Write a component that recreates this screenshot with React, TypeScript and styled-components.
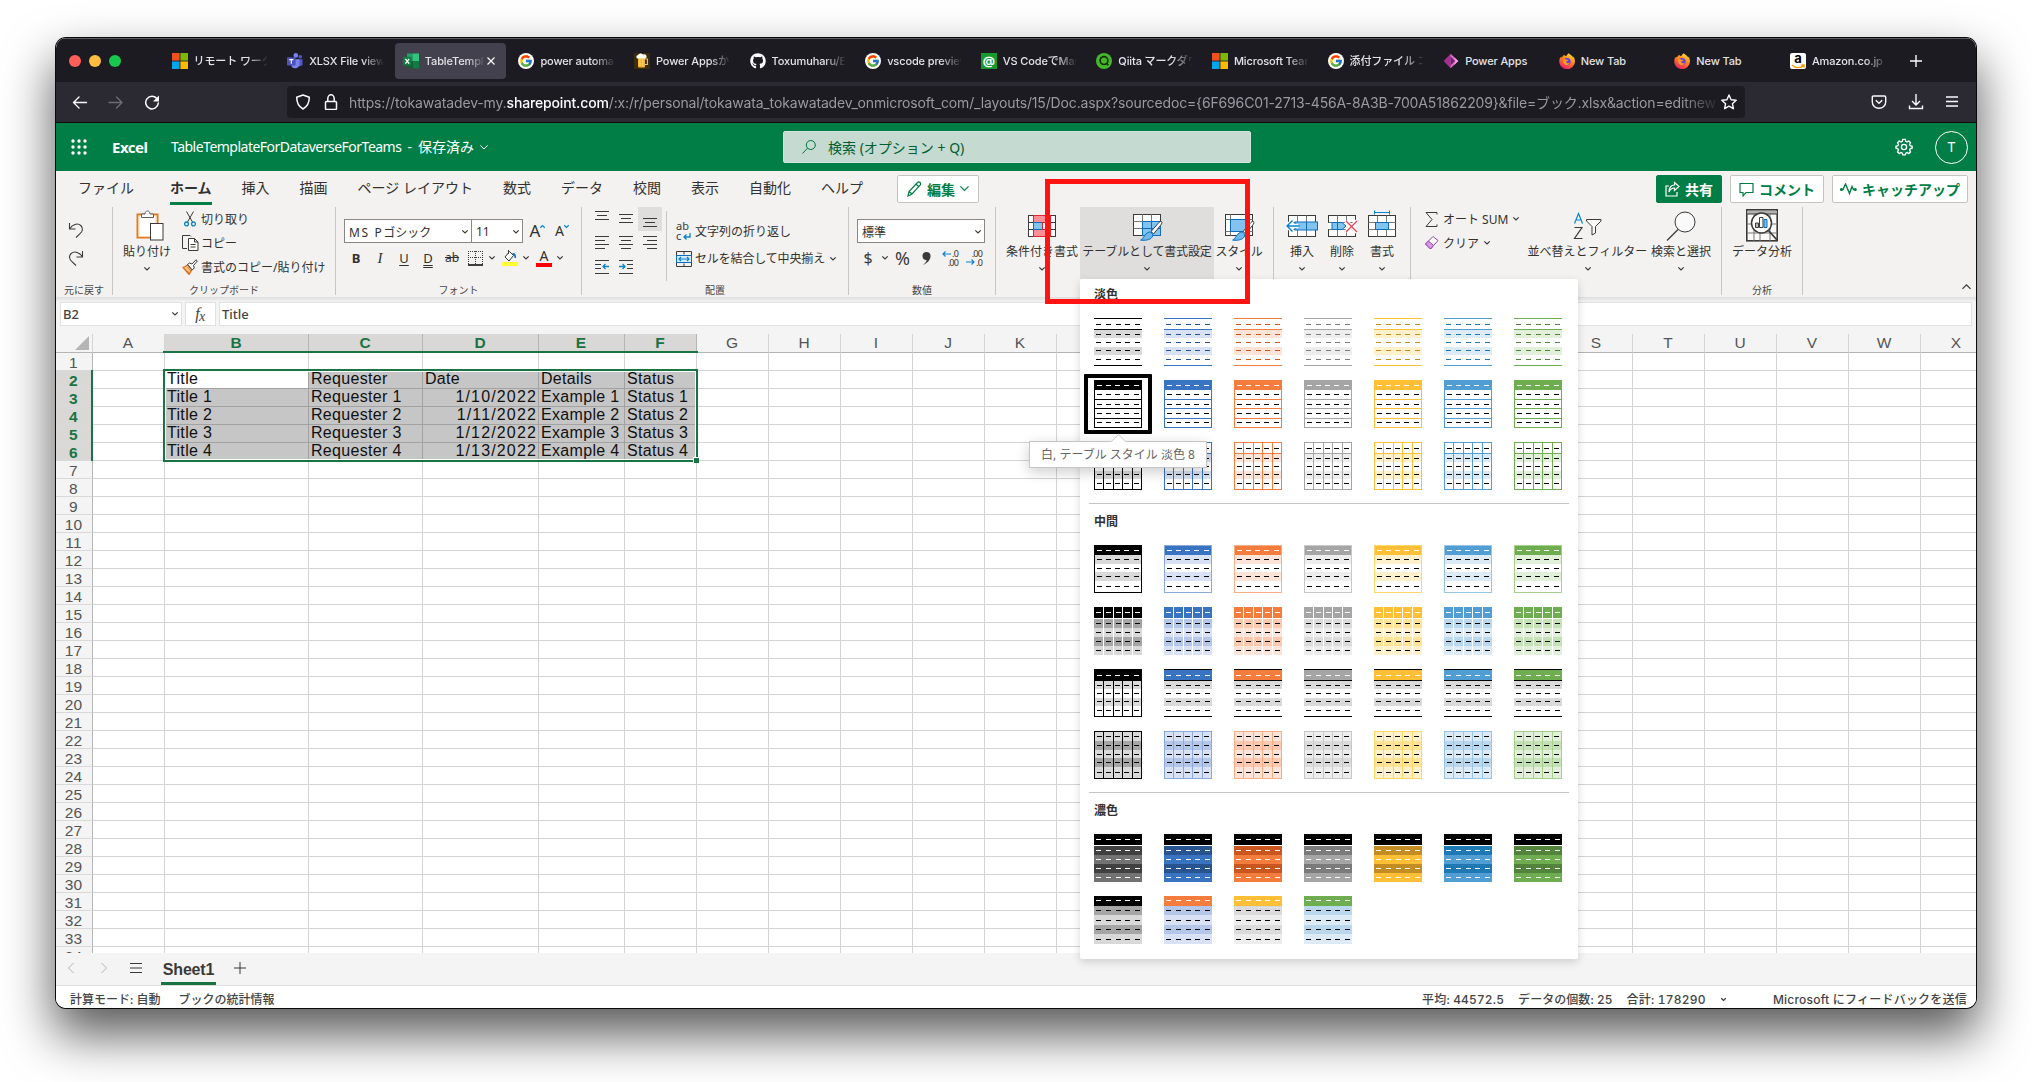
import React from "react";
import styled, { createGlobalStyle, css } from "styled-components";
import { FcGoogle } from "react-icons/fc";
import { FaGithub } from "react-icons/fa";

const UI = `"Noto Sans", "Noto Sans CJK JP", sans-serif`;
const MAC = `Inter, "Noto Sans CJK JP", sans-serif`;
const SHEET = `"Liberation Sans", "Noto Sans CJK JP", sans-serif`;
const GREEN = "#007e45";

const Global = createGlobalStyle`
  html, body { margin: 0; background: #fff; }
  body { width: 2032px; height: 1082px; overflow: hidden; font-family: ${UI}; }
  * { box-sizing: border-box; }
  svg { display: block; flex: none; }
`;

/* ---------- window and browser chrome ---------- */

const Desktop = styled.div`
  width: 2032px;
  height: 1082px;
  padding: 38px 56px 0;
  overflow: hidden;
`;

const Window = styled.div`
  position: relative;
  width: 1920px;
  height: 970px;
  border-radius: 10px;
  box-shadow: 0 0 0 1px #0a0a0a, 0 25px 50px 2px rgba(0, 0, 0, 0.65);
`;

const Clip = styled.div`
  width: 100%;
  height: 100%;
  border-radius: 10px;
  overflow: hidden;
  display: flex;
  flex-direction: column;
  background: #fff;
`;

const TabStrip = styled.div`
  flex: none;
  height: 44px;
  display: flex;
  align-items: center;
  padding-left: 13px;
  background: #1c1b22;
  border-top: 1px solid #5c5b60;
`;

const Lights = styled.div`
  display: flex;
  gap: 8px;
  width: 94.6px;
`;

const Light = styled.span<{ $c: string }>`
  width: 12px;
  height: 12px;
  border-radius: 50%;
  background: ${(p) => p.$c};
`;

const Tab = styled.div<{ $active?: boolean }>`
  width: 111.6px;
  margin-right: 4px;
  height: 36px;
  padding: 0 8px;
  display: flex;
  align-items: center;
  gap: 6px;
  border-radius: 4px;
  background: ${(p) => (p.$active ? "#42414d" : "transparent")};
  color: #fbfbfe;
`;

const TabText = styled.span<{ $fade?: boolean }>`
  flex: 1;
  min-width: 0;
  overflow: hidden;
  white-space: nowrap;
  font: 500 11px/16px ${MAC};
  letter-spacing: -0.12px;
  color: #e3e3e8;
  ${(p) =>
    p.$fade &&
    css`
      mask-image: linear-gradient(to right, #000 72%, transparent 102%);
    `}
`;

const TabClose = styled.span`
  margin: 0 3px 0 -3px;
`;

const NewTab = styled.div`
  padding-left: 12px;
  color: #fbfbfe;
`;

const NavBar = styled.div`
  flex: none;
  height: 41px;
  display: flex;
  align-items: center;
  padding: 0 16px 0 16px;
  background: #2b2a33;
  border-bottom: 1px solid #0c0c0d;
`;

const NavButtons = styled.div`
  display: flex;
  gap: 20px;
  width: 215px;
`;

const UrlBox = styled.div`
  width: 1458px;
  height: 32px;
  display: flex;
  align-items: center;
  padding: 0 8px 0 8px;
  border-radius: 4px;
  background: #1c1b22;
`;

const Url = styled.div`
  flex: 1;
  min-width: 0;
  margin: 2px 6px 0 10px;
  overflow: hidden;
  white-space: nowrap;
  font: 400 14px/20px ${MAC};
  letter-spacing: -0.15px;
  color: #9a99a1;
  mask-image: linear-gradient(to right, #000 97.5%, transparent 100.5%);
  b {
    font-weight: 500;
    color: #fbfbfe;
  }
`;

const NavRight = styled.div`
  margin-left: auto;
  display: flex;
  gap: 19px;
`;

/* ---------- Excel header ---------- */

const Header = styled.div`
  flex: none;
  height: 48px;
  display: flex;
  align-items: center;
  background: ${GREEN};
  color: #fff;
`;

const Waffle = styled.div`
  width: 56px;
  padding-left: 15px;
`;

const AppName = styled.span`
  width: 59px;
  font: 700 15px/20px ${UI};
  letter-spacing: -0.5px;
`;

const DocName = styled.div`
  width: 612px;
  display: flex;
  align-items: center;
  gap: 6px;
  white-space: nowrap;
  font-size: 14px;
  line-height: 20px;
`;

const Latin = styled.span<{ $s?: number }>`
  letter-spacing: ${(p) => p.$s ?? 0}px;
`;

const SearchBox = styled.div`
  width: 468px;
  height: 32px;
  display: flex;
  align-items: center;
  gap: 12px;
  padding-left: 18px;
  border: 1px solid #d5e4dc;
  border-radius: 2px;
  background: #c5dad0;
  color: #005e33;
  font-size: 14px;
`;

const HeaderRight = styled.div`
  margin-left: auto;
  margin-right: 8px;
  display: flex;
  align-items: center;
  gap: 22px;
`;

const Avatar = styled.div`
  width: 33px;
  height: 33px;
  border: 1px solid #fff;
  border-radius: 50%;
  font-size: 14px;
  line-height: 30px;
  text-align: center;
`;

/* ---------- ribbon ---------- */

const Ribbon = styled.div`
  flex: none;
  height: 126px;
  background: #f3f2f1;
  color: #323130;
`;

const MenuRow = styled.div`
  height: 36px;
  display: flex;
  align-items: center;
  padding: 0 8px 0 22px;
`;

const MenuItem = styled.span<{ $active?: boolean; $gap?: number }>`
  height: 31px;
  margin-right: ${(p) => p.$gap ?? 30}px;
  white-space: nowrap;
  font-size: 14px;
  line-height: 28px;
  font-weight: ${(p) => (p.$active ? 700 : 400)};
  border-bottom: 3px solid ${(p) => (p.$active ? GREEN : "transparent")};
`;

const ActionButton = styled.div<{ $w: number; $solid?: boolean; $left?: string }>`
  width: ${(p) => p.$w}px;
  height: 28px;
  margin-left: ${(p) => p.$left ?? "8px"};
  display: flex;
  align-items: center;
  justify-content: center;
  gap: 5px;
  border: 1px solid ${(p) => (p.$solid ? GREEN : "#c6c4c2")};
  border-radius: 2px;
  background: ${(p) => (p.$solid ? GREEN : "#fff")};
  color: ${(p) => (p.$solid ? "#fff" : GREEN)};
  font-size: 14px;
  font-weight: 700;
  white-space: nowrap;
`;

const Groups = styled.div`
  height: 88px;
  display: flex;
`;

const Group = styled.div<{ $w: number }>`
  flex: none;
  width: ${(p) => p.$w}px;
  height: 88px;
  display: flex;
  flex-direction: column;
  border-right: 1px solid #c8c6c4;
`;

const GroupBody = styled.div<{ $pad: number }>`
  height: 76px;
  display: flex;
  padding-left: ${(p) => p.$pad}px;
`;

const GroupLabel = styled.div`
  height: 12px;
  text-align: center;
  font-size: 10px;
  line-height: 14px;
  color: #484644;
  white-space: nowrap;
`;

const Stack = styled.div<{ $top?: number; $gap?: number; $w?: number; $left?: number }>`
  display: flex;
  flex-direction: column;
  gap: ${(p) => p.$gap ?? 0}px;
  padding-top: ${(p) => p.$top ?? 0}px;
  margin-left: ${(p) => p.$left ?? 0}px;
  width: ${(p) => (p.$w ? p.$w + "px" : "auto")};
`;

const Big = styled.div<{ $w: number; $active?: boolean }>`
  position: relative;
  flex: none;
  width: ${(p) => p.$w}px;
  height: 72px;
  display: flex;
  flex-direction: column;
  align-items: center;
  background: ${(p) => (p.$active ? "#dfdedd" : "transparent")};
`;

const BigIcon = styled.div<{ $dx?: number }>`
  height: 37px;
  display: flex;
  align-items: center;
  padding-left: ${(p) => p.$dx ?? 0}px;
`;

const BigLabel = styled.div<{ $s?: number }>`
  height: 16px;
  font-size: 12px;
  line-height: 16px;
  white-space: nowrap;
  letter-spacing: ${(p) => p.$s ?? 0}px;
`;

const BigChev = styled.div`
  height: 18px;
  display: flex;
  align-items: center;
`;

const LineItem = styled.div`
  height: 24px;
  display: flex;
  align-items: center;
  font-size: 12px;
  white-space: nowrap;
`;

const Slot = styled.div<{ $w: number; $bg?: string }>`
  flex: none;
  width: ${(p) => p.$w}px;
  height: 24px;
  display: flex;
  align-items: center;
  justify-content: center;
  background: ${(p) => p.$bg ?? "transparent"};
`;

const RowBox = styled.div`
  display: flex;
  align-items: center;
`;

const Combo = styled.div<{ $w: number; $join?: boolean }>`
  width: ${(p) => p.$w}px;
  height: 24px;
  margin-left: ${(p) => (p.$join ? -1 : 0)}px;
  padding: 1px 3px 0 4px;
  display: flex;
  align-items: center;
  justify-content: space-between;
  border: 1px solid #8a8886;
  background: #fff;
  font-size: 12px;
  white-space: pre;
`;

const Glyph = styled.span<{ $style?: "b" | "i" | "u" | "d" | "s" }>`
  font-family: ${(p) => (p.$style === "i" ? `"Liberation Serif", serif` : UI)};
  font-size: ${(p) => (p.$style === "s" ? 12 : p.$style === "i" ? 15 : 13)}px;
  line-height: 18px;
  font-weight: ${(p) => (p.$style === "b" ? 700 : 400)};
  font-style: ${(p) => (p.$style === "i" ? "italic" : "normal")};
  text-decoration: ${(p) =>
    p.$style === "u"
      ? "underline"
      : p.$style === "d"
        ? "underline double"
        : p.$style === "s"
          ? "line-through"
          : "none"};
  text-underline-offset: 2px;
`;

const Symbol = styled.span<{ $size: number }>`
  font-size: ${(p) => p.$size}px;
  line-height: 24px;
  color: #3b3a39;
`;

const VRule = styled.div`
  width: 1px;
  height: 70px;
  margin: 4px 0 0 4px;
  background: #c8c6c4;
`;

const Collapse = styled.div`
  margin: 77px 5px 0 auto;
`;

/* ---------- formula bar ---------- */

const FormulaBar = styled.div`
  flex: none;
  height: 37px;
  display: flex;
  padding: 5px 4px 0;
  gap: 3px;
  background: linear-gradient(#dfdedd, #f0f0f0 4px, #f4f4f4 5px);
`;

const FBox = styled.div<{ $w?: number; $center?: boolean }>`
  width: ${(p) => (p.$w ? p.$w + "px" : "auto")};
  flex: ${(p) => (p.$w ? "none" : 1)};
  height: 24px;
  display: flex;
  align-items: center;
  justify-content: ${(p) => (p.$center ? "center" : "space-between")};
  padding: 0 3px 0 2px;
  border: 1px solid #e1e1e1;
  background: #fff;
  font-size: 13px;
  font-weight: 500;
  color: #444;
`;

const Fx = styled.span`
  font: italic 16px/20px "Liberation Serif", serif;
  letter-spacing: -0.5px;
  sub {
    font-size: 14px;
    vertical-align: -2px;
    line-height: 0;
  }
`;

/* ---------- sheet ---------- */

const Sheet = styled.div`
  position: relative;
  flex: none;
  height: 619px;
  overflow: hidden;
  background: #fff;
`;

const SheetRow = styled.div<{ $h: number }>`
  display: flex;
  width: 2000px;
  height: ${(p) => p.$h}px;
`;

const ColHead = styled.div<{ $w: number; $sel?: boolean }>`
  flex: none;
  width: ${(p) => p.$w}px;
  height: 19px;
  padding-right: 1px;
  text-align: center;
  font: ${(p) => (p.$sel ? 700 : 400)} 15.5px/18px ${SHEET};
  color: ${(p) => (p.$sel ? "#1a7343" : "#555")};
  background: ${(p) => (p.$sel ? "#d9d8d6" : "#f4f4f4")};
  border-right: 1px solid ${(p) => (p.$sel ? "#b5b5b5" : "#d4d4d4")};
  border-bottom: 1px solid #b5b5b5;
`;

const Corner = styled(ColHead)`
  display: flex;
  justify-content: flex-end;
  align-items: flex-end;
  padding: 0 3px 2px 0;
`;

const RowHead = styled.div<{ $sel?: boolean }>`
  flex: none;
  width: 37px;
  height: 18px;
  padding-right: 1px;
  text-align: center;
  font: ${(p) => (p.$sel ? 700 : 400)} 15.5px/20px ${SHEET};
  letter-spacing: 0.2px;
  color: ${(p) => (p.$sel ? "#1a7343" : "#555")};
  background: ${(p) => (p.$sel ? "#d9d8d6" : "#f4f4f4")};
  border-right: 1px solid #b5b5b5;
  border-bottom: 1px solid #d9d9d9;
`;

const Cell = styled.div<{ $w: number; $sel?: boolean; $right?: boolean; $active?: boolean }>`
  flex: none;
  width: ${(p) => p.$w}px;
  height: 18px;
  padding: 0 1px 0 2px;
  text-align: ${(p) => (p.$right ? "right" : "left")};
  font: 16px/16px ${SHEET};
  letter-spacing: ${(p) => (p.$right ? 1.15 : 0.32)}px;
  white-space: nowrap;
  color: #111;
  background: ${(p) => (p.$active ? "#fff" : p.$sel ? "#c6c6c6" : "#fff")};
  border-right: 1px solid ${(p) => (p.$sel ? "#a2a2a2" : "#d4d4d4")};
  border-bottom: 1px solid ${(p) => (p.$sel ? "#a2a2a2" : "#d4d4d4")};
`;

const Selection = styled.div`
  position: absolute;
  left: 107px;
  top: 35px;
  width: 535px;
  height: 93px;
  border: 2px solid #1a7343;
  box-shadow: inset 0 0 0 1px #fff;
`;

const Handle = styled.div`
  position: absolute;
  right: -3px;
  bottom: -3px;
  width: 6px;
  height: 6px;
  background: #1a7343;
  border: 1px solid #fff;
  border-width: 1px 0 0 1px;
`;

const ColMark = styled.div`
  position: absolute;
  left: 107px;
  top: 17px;
  width: 535px;
  height: 2px;
  background: #1a7343;
`;

const RowMark = styled.div`
  position: absolute;
  left: 35px;
  top: 36px;
  width: 2px;
  height: 91px;
  background: #1a7343;
`;

const SheetTabs = styled.div`
  flex: none;
  height: 33px;
  display: flex;
  align-items: flex-start;
  padding-left: 9px;
  background: #f4f4f4;
  border-bottom: 1px solid #dcdcdc;
  color: #3b3a39;
`;

const TabSlot = styled.div<{ $w: number }>`
  width: ${(p) => p.$w}px;
  height: 30px;
  display: flex;
  align-items: center;
`;

const SheetName = styled.div`
  width: 55px;
  height: 32px;
  margin-right: 18px;
  text-align: center;
  font: 700 16px/34px ${SHEET};
  letter-spacing: -0.2px;
  border-bottom: 3px solid #1a7343;
`;

const StatusBar = styled.div`
  flex: 1;
  display: flex;
  align-items: center;
  padding: 5px 9px 0 14px;
  background: #fff;
  font: 500 12px/17px ${MAC};
  font-variant-numeric: tabular-nums;
  color: #444;
  white-space: pre;
`;

const Stat = styled.span<{ $gap: number; $s?: number }>`
  margin-right: ${(p) => p.$gap}px;
  letter-spacing: ${(p) => p.$s ?? 0}px;
`;

const Spacer = styled.span`
  flex: 1;
`;

/* ---------- table style gallery ---------- */

const Gallery = styled.div`
  position: absolute;
  left: 0;
  top: 72px;
  width: 498px;
  height: 680px;
  padding: 6px 9px 0;
  background: #fff;
  border-radius: 2px;
  box-shadow: 0 3px 8px rgba(0, 0, 0, 0.16);
  z-index: 5;
`;

const Section = styled.div<{ $rule?: boolean }>`
  padding: ${(p) => (p.$rule ? "8px 5px 0" : "0 5px 0")};
  margin-top: ${(p) => (p.$rule ? 13 : 0)}px;
  border-top: ${(p) => (p.$rule ? "1px solid #c4c4c4" : "none")};
`;

const SectionTitle = styled.div<{ $h: number }>`
  height: ${(p) => p.$h}px;
  font: 700 12px/20px ${UI};
  color: #323130;
`;

const Swatches = styled.div`
  display: grid;
  grid-template-columns: repeat(7, 48px);
  gap: 14px 22px;
`;

const SwatchCell = styled.div`
  position: relative;
  width: 48px;
  height: 48px;
`;

const Picked = styled.div`
  position: absolute;
  left: -10px;
  top: -6px;
  width: 68px;
  height: 60px;
  border: 4px solid #000;
  border-radius: 1px;
`;

const Tooltip = styled.div`
  position: absolute;
  left: -65px;
  top: 61px;
  width: 178px;
  height: 27px;
  z-index: 3;
  background: #fff;
  border: 1px solid #c8c6c4;
  box-shadow: 0 4px 14px rgba(0, 0, 0, 0.2);
  color: #666;
  font: 12px/25px ${UI};
  text-align: center;
  white-space: nowrap;
  &::before {
    content: "";
    position: absolute;
    left: 83px;
    top: -6px;
    width: 10px;
    height: 10px;
    background: #fff;
    border: 1px solid #d8d6d4;
    border-width: 1px 0 0 1px;
    transform: rotate(45deg);
  }
`;

const RedFrame = styled.div`
  position: absolute;
  left: 989px;
  top: 141px;
  width: 205px;
  height: 125px;
  border: 5px solid #ff1414;
  z-index: 9;
`;

/* ---------- icons ---------- */

const INK = "#3b3a39";
const BLUE = "#0a84d0";

const Chev = ({ size = 6, c = INK, up, w = 1.2 }: { size?: number; c?: string; up?: boolean; w?: number }) => (
  <svg width={size} height={size * 0.6} viewBox="0 0 10 6" fill="none" stroke={c} strokeWidth={(w * 10) / size} overflow="visible">
    <path d={up ? "M0.5 5.5 5 1 9.5 5.5" : "M0.5 0.5 5 5 9.5 0.5"} />
  </svg>
);

const Ic = ({ w = 20, h = w, box, children, c = INK, sw = 1 }: { w?: number; h?: number; box?: string; children: React.ReactNode; c?: string; sw?: number }) => (
  <svg width={w} height={h} viewBox={box ?? `0 0 ${w} ${h}`} fill="none" stroke={c} strokeWidth={sw}>
    {children}
  </svg>
);

const MsLogo = () => (
  <svg width="16" height="16">
    <rect width="7.6" height="7.6" fill="#f25022" />
    <rect x="8.4" width="7.6" height="7.6" fill="#7fba00" />
    <rect y="8.4" width="7.6" height="7.6" fill="#00a4ef" />
    <rect x="8.4" y="8.4" width="7.6" height="7.6" fill="#ffb900" />
  </svg>
);

const TeamsLogo = () => (
  <svg width="16" height="16">
    <circle cx="13.3" cy="3.8" r="1.8" fill="#5059c9" />
    <circle cx="8.8" cy="2.4" r="2.3" fill="#7b83eb" />
    <path d="M10 6.2h5.5v5a2.6 2.6 0 0 1-4 1.6z" fill="#5059c9" />
    <path d="M5 6.2h7.5v5a4.4 4.4 0 0 1-8 2.2z" fill="#7b83eb" />
    <rect y="4.2" width="8.6" height="8.4" rx="0.8" fill="#4b53bc" />
    <path d="M2.2 6.6h4.2M4.3 6.6v4.2" stroke="#fff" strokeWidth="1.1" />
  </svg>
);

const ExcelLogo = () => (
  <svg width="16" height="16">
    <rect x="4" y="0.5" width="6" height="7.5" fill="#21a366" />
    <rect x="10" y="0.5" width="6" height="7.5" fill="#33c481" />
    <rect x="4" y="8" width="6" height="7.5" fill="#185c37" />
    <rect x="10" y="8" width="6" height="7.5" fill="#107c41" />
    <rect y="3.8" width="8.6" height="8.6" rx="0.8" fill="#107c41" />
    <path d="M2.4 5.8l3.8 4.8M6.2 5.8l-3.8 4.8" stroke="#fff" strokeWidth="1.3" />
  </svg>
);

const GoogleDisc = styled.span`
  width: 16px;
  height: 16px;
  flex: none;
  display: grid;
  place-items: center;
  border-radius: 50%;
  background: #fff;
`;

const Google = () => (
  <GoogleDisc>
    <FcGoogle size={14} />
  </GoogleDisc>
);

const Beer = () => (
  <svg width="16" height="16">
    <rect width="16" height="16" fill="#3c2c0c" />
    <rect x="4" y="4" width="7" height="10.5" rx="1" fill="#f8b62c" />
    <path d="M6 6v7M8.6 6v7" stroke="#ffd878" strokeWidth="0.9" />
    <path d="M11 6h2.4v5.5H11" fill="none" stroke="#d9c9a0" strokeWidth="1.1" />
    <path d="M3.4 5.5a1.8 1.8 0 0 1 .6-3.4 3 3 0 0 1 5-.5 2 2 0 0 1 2.4 3.9z" fill="#fff" />
  </svg>
);

const AtMark = styled.span`
  width: 16px;
  height: 16px;
  flex: none;
  background: #159a2d;
  color: #fff;
  font: 700 12px/15px ${MAC};
  text-align: center;
`;

const Qiita = () => (
  <svg width="16" height="16" fill="none">
    <circle cx="8" cy="8" r="8" fill="#45b82a" />
    <circle cx="8" cy="7.6" r="3.9" stroke="#14310b" strokeWidth="1.7" />
    <path d="M10.5 10.4l1.8 1.9" stroke="#14310b" strokeWidth="1.6" />
    <path d="M4 4.4l1 .4" stroke="#14310b" strokeWidth="1" />
  </svg>
);

const PowerApps = () => (
  <svg width="16" height="16">
    <path d="M7.6 0.8 12 8l-4.4 7.2L0.6 8z" fill="#a2308f" />
    <path d="M7.6 0.8 15.4 8l-7.8 7.2z" fill="#d56fc4" />
    <path d="M7.6 3.6 12 8l-4.4 4.4z" fill="#7a1a6c" />
    <path d="M10.8 4.2 15.4 8l-4.6 4.2L12.6 8z" fill="#ee9fe0" />
  </svg>
);

const Firefox = () => (
  <svg width="16" height="16">
    <defs>
      <linearGradient id="ffx" x1="0.8" y1="0" x2="0.3" y2="1">
        <stop offset="0" stopColor="#ffe040" />
        <stop offset="0.45" stopColor="#ff8a16" />
        <stop offset="1" stopColor="#f0196e" />
      </linearGradient>
    </defs>
    <path d="M9.6 0.2c1 1 3.4 2 4.6 4.4.3-.3.3-.8.2-1.2 1.7 2.1 2 5.8.8 8.2A7.8 7.8 0 0 1 .3 8.6c-.1-2.2.5-4 1.9-5.2 0 .5.1.9.4 1.2C3.3 3.4 4.4 2.8 5 1.4c.4 1 1.1 1.4 2.3 1.6C7.6 2 8.6 1.2 9.6.2z" fill="url(#ffx)" />
    <circle cx="8" cy="8.6" r="3.7" fill="#6b3fe0" />
    <path d="M4.2 6.6c1.2-.9 2.4-.5 3.3.2l1.9.3c-.5 1.3-2 .9-2.2 1.9.4 1.5 2.3 1.7 3.6.8-.5 2-3 2.9-4.8 1.9-1.7-1-2.3-3.2-1.8-5.1z" fill="#ff9a1a" />
  </svg>
);

const AmazonTile = styled.span`
  position: relative;
  width: 16px;
  height: 16px;
  flex: none;
  border-radius: 2px;
  background: #fff;
  color: #000;
  font: 700 13px/11px ${MAC};
  text-align: center;
  svg {
    position: absolute;
    left: 1px;
    bottom: 0;
  }
`;

const Amazon = () => (
  <AmazonTile>
    a
    <svg width="14" height="5" fill="none" stroke="#ff9900" strokeWidth="1.4">
      <path d="M1 1c3.5 3.4 8 3.4 11.5 .6M10.2 1h2.8v2.6" />
    </svg>
  </AmazonTile>
);

const TABS: { icon: React.ReactNode; text: string; active?: boolean; fade?: boolean }[] = [
  { icon: <MsLogo />, text: "リモート ワークの", fade: true },
  { icon: <TeamsLogo />, text: "XLSX File viewer", fade: true },
  { icon: <ExcelLogo />, text: "TableTemplate", active: true, fade: true },
  { icon: <Google />, text: "power automate", fade: true },
  { icon: <Beer />, text: "Power Appsから", fade: true },
  { icon: <FaGithub size={16} />, text: "Toxumuharu/Ex", fade: true },
  { icon: <Google />, text: "vscode preview", fade: true },
  { icon: <AtMark>@</AtMark>, text: "VS CodeでMark", fade: true },
  { icon: <Qiita />, text: "Qiita マークダウ", fade: true },
  { icon: <MsLogo />, text: "Microsoft Teams", fade: true },
  { icon: <Google />, text: "添付ファイル コン", fade: true },
  { icon: <PowerApps />, text: "Power Apps" },
  { icon: <Firefox />, text: "New Tab" },
  { icon: <Firefox />, text: "New Tab" },
  { icon: <Amazon />, text: "Amazon.co.jp", fade: true },
];

/* table based ribbon icons, 28x22 grid */
const GridBase = ({ children, fill = "#fff" }: { children?: React.ReactNode; fill?: string }) => (
  <g>
    <rect x="0.5" y="3.5" width="27" height="21" fill={fill} stroke={INK} />
    <path d="M0.5 10.5h27M0.5 17.5h27M9.5 3.5v21M18.5 3.5v21" stroke="#797774" strokeWidth="1" />
    {children}
  </g>
);

const Brush = ({ x = 8, y = 10 }: { x?: number; y?: number }) => (
  <g transform={`translate(${x} ${y})`}>
    <path d="M21.5 0.5c1 .8.2 2.2-1 3.9l-6.8 8.4-2.7-2.2L18 2.5c1.4-1.6 2.6-2.7 3.5-2z" fill="#fff" stroke={INK} />
    <path d="M8 11.5c2.3-1.3 5.4 1 4.6 3.6-.9 2.9-5.3 4.8-12 4 3.3-1.3 3.3-5.8 7.4-7.6z" fill="#6db8ec" stroke="#0f6cbd" />
  </g>
);

const CondIcon = () => (
  <Ic w={28} h={28}>
    <GridBase>
      <rect x="5.5" y="3.5" width="17" height="21" fill="#ff8f97" stroke="#e0242f" />
      <rect x="5.5" y="10.5" width="9" height="7" fill="#83c3f0" stroke="#0f6cbd" />
      <rect x="14.5" y="10.5" width="8" height="7" fill="#fff" stroke="#e0242f" />
      <path d="M0 10.5h5M0 17.5h5M23 10.5h5M23 17.5h5" stroke={INK} />
    </GridBase>
  </Ic>
);

const TableFmtIcon = () => (
  <Ic w={30} h={31} box="0 -1 30 31">
    <GridBase>
      <path d="M9.5 10.5h18v14h-18zM9.5 17.5h18M18.5 10.5v14" fill="#83c3f0" stroke="#0f6cbd" />
    </GridBase>
    <Brush x={7} y={10} />
  </Ic>
);

const StyleIcon = () => (
  <Ic w={30} h={31} box="0 -1 30 31">
    <rect x="0.5" y="3.5" width="27" height="21" fill="#fff" />
    <path d="M0.5 8.5h27M0.5 20.5h27M5.5 3.5v21M23.5 3.5v21" stroke="#797774" />
    <rect x="5.5" y="8.5" width="18" height="12" fill="#83c3f0" stroke="#0f6cbd" />
    <Brush x={7} y={10} />
  </Ic>
);

const InsertIcon = () => (
  <Ic w={32} h={28}>
    <g transform="translate(2 0)">
      <GridBase />
      <rect x="7" y="10" width="22.5" height="8" fill="#83c3f0" stroke="#0f6cbd" />
      <path d="M18.5 10v8" stroke="#0f6cbd" />
    </g>
    <path d="M12.5 14h-10M6.5 8.5 1 14l5.5 5.5" stroke="#fff" strokeWidth="4" />
    <path d="M13.5 14H1.5M6.5 8.5 1 14l5.5 5.5" stroke={BLUE} strokeWidth="1.5" />
  </Ic>
);

const DeleteIcon = () => (
  <Ic w={30} h={28}>
    <GridBase>
      <path d="M0 11h28v6H0z" fill="#fff" stroke="none" />
      <path d="M4 10.5h10l4 3.5-4 3.5H4z" fill="#83c3f0" stroke="#0f6cbd" />
      <path d="M9.5 10.5v7" stroke="#0f6cbd" />
    </GridBase>
    <path d="M18 9l11 11M29 9 18 20" stroke="#fff" strokeWidth="4" />
    <path d="M18 9l11 11M29 9 18 20" stroke="#e8444e" strokeWidth="1.3" />
  </Ic>
);

const FormatIcon = () => (
  <Ic w={28} h={32} box="0 -2 28 32">
    <GridBase>
      <rect x="7.5" y="10.5" width="13" height="7" fill="#83c3f0" stroke="#0f6cbd" />
    </GridBase>
    <path d="M6.5 -1.5v4M21.5 -1.5v4M6.5 0.5h15" stroke={BLUE} />
  </Ic>
);

const PasteIcon = () => (
  <Ic w={28} h={31}>
    <rect x="1.5" y="4.5" width="20" height="23" fill="#fff" stroke="#e07a28" strokeWidth="2" />
    <rect x="3" y="6" width="17" height="20.5" fill="none" stroke="#fbd9a0" />
    <path d="M5.5 7.5V4H9c0-1.8 1-3 2.5-3S14 2.200 14 4h3.500v3.500z" fill="#fff" stroke="#605e5c" />
    <rect x="14.5" y="13.5" width="12.5" height="16.5" fill="#fff" />
  </Ic>
);

const ScissorsIcon = () => (
  <Ic w={12} h={16}>
    <path d="M2.5 0.5 8.5 11M9.5 0.5 3.5 11" />
    <circle cx="2.5" cy="12.9" r="1.9" stroke={BLUE} strokeWidth="1.3" />
    <circle cx="9.5" cy="12.9" r="1.9" stroke={BLUE} strokeWidth="1.3" />
  </Ic>
);

const CopyIcon = () => (
  <Ic w={17} h={16}>
    <path d="M5 13.5H0.5v-13H8l1 1" />
    <path d="M6.5 3.5h6l3.5 3.5v8.5H6.5zM12.5 3.5V7H16M8.5 9.5h5M8.5 12h5" fill="#fff" />
  </Ic>
);

const PainterIcon = () => (
  <Ic w={16} h={16}>
    <path d="M1 8.5 6 6l4 4.5L7 15.5z" fill="#f9c890" stroke="#e0711c" strokeWidth="1.3" />
    <path d="M5.5 5.5 7.5 4l2.5 1L14 .8 15.3 2 11.5 6.5l.8 2.5-2 2z" fill="#fff" />
    <path d="M3 10.5l5 4M5.5 8l3.5 4" stroke="#e0711c" />
  </Ic>
);

const UndoIcon = ({ flip }: { flip?: boolean }) => (
  <Ic w={16} h={16} sw={1.1}>
    <g transform={flip ? "translate(16 0) scale(-1 1)" : undefined}>
      <path d="M1.5 1v6h6" />
      <path d="M1.8 6.7C4 2.5 9.5 0.5 12.8 3.5c3 3 1.5 6.3-.8 8.2L8 15.5" />
    </g>
  </Ic>
);

const Lines = ({ kind, top = 0 }: { kind: "c" | "l" | "r" | "v"; top?: number }) => {
  const ys = kind === "v" ? [0.5, 4.5, 8.5] : [0.5, 4.5, 8.5, 12.5];
  return (
    <Ic w={14} h={24} c={INK}>
      <g transform={`translate(0 ${top})`}>
        {ys.map((y, i) => {
          const short = i % 2 === 1;
          const x = !short || kind === "l" ? 0 : kind === "r" ? 4 : 2;
          return <path key={y} d={`M${x} ${y}h${short ? 10 : 14}`} />;
        })}
      </g>
    </Ic>
  );
};

const IndentIcon = ({ right }: { right?: boolean }) => (
  <Ic w={14} h={14}>
    <path d={right ? "M0 .5h14M8 4.5h6M8 8.5h6M0 13.5h14" : "M0 .5h14M0 4.5h6M0 8.5h6M0 13.5h14"} />
    <path d={right ? "M0 6.5h6M3.5 4l2.5 2.5L3.5 9" : "M14 6.5H8M10.5 4 8 6.5 10.5 9"} stroke={BLUE} strokeWidth="1.3" />
  </Ic>
);

const BordersIcon = () => (
  <Ic w={15} h={15}>
    <path d="M0 .5h15M.5 0v13M14.5 0v13M7.5 0v13M0 6.5h15" strokeDasharray="1 1" />
    <path d="M0 14h15" stroke="#111" strokeWidth="1.6" />
  </Ic>
);

const FillIcon = () => (
  <Ic w={16} h={16}>
    <path d="M7.5 1.5 3 7l4 4 4.5-5.5zM6.5 0v4" fill="#fff" />
    <path d="M10.5 4c2-.5 2.8 1 2.8 4" stroke="#0f6cbd" strokeWidth="1.6" />
    <path d="M0 14h16" stroke="#ffff38" strokeWidth="4" />
  </Ic>
);

const ColorBox = styled.div`
  width: 16px;
  height: 17px;
  border-bottom: 4px solid #f00;
  text-align: center;
  font: 14px/12px ${UI};
`;

const WrapBox = styled.div`
  position: relative;
  width: 16px;
  height: 20px;
  display: flex;
  flex-direction: column;
  font: 11px/10px ${UI};
  color: ${INK};
  svg {
    position: absolute;
    right: 1px;
    bottom: 0;
  }
`;

const DecBox = styled.div<{ $right?: boolean }>`
  width: 16px;
  height: 18px;
  position: relative;
  font: 9px/9px ${UI};
  letter-spacing: -0.8px;
  text-align: right;
  white-space: pre;
  svg {
    position: absolute;
    left: 0;
    top: ${(p) => (p.$right ? 10 : 2)}px;
  }
`;

const MergeIcon = () => (
  <Ic w={16} h={16}>
    <path d="M.5 .5h15v15H.5zM8 .5v3M8 12.5v3" />
    <path d="M.5 4.5h15v7H.5z" fill="#d5ebfb" stroke="#0f6cbd" />
    <path d="M3 8h10M5 6 3 8l2 2M11 6l2 2-2 2" stroke={BLUE} strokeWidth="1.2" />
  </Ic>
);

const AFont = styled.span<{ $size: number }>`
  font: ${(p) => p.$size}px/18px ${UI};
  align-self: center;
`;

const SigmaIcon = () => (
  <Ic w={13} h={15}>
    <path d="M12 2.5V.5H1l6 7-6 7h11v-2" />
  </Ic>
);

const EraserIcon = () => (
  <Ic w={16} h={16}>
    <path d="M1.5 9 9 1.5l5 4L6.5 14z" fill="#fff" stroke="#9a3fb0" />
    <path d="M1.5 9 4.5 6l5 4.5-3 3.5z" fill="#d79be2" stroke="#9a3fb0" />
  </Ic>
);

const SortIcon = () => (
  <svg width="30" height="28" fill="none">
    <path d="M1.5 11.5 5.5 1.5 9.5 11.5M3 8h5" stroke={BLUE} strokeWidth="1.2" />
    <path d="M1.5 15.5h7.5l-7.5 11h8" stroke={INK} strokeWidth="1.2" />
    <path d="M13.5 7.5H28V9l-5.5 5.5V21L19 23v-8.5L13.5 9z" stroke={INK} fill="#fafafa" />
  </svg>
);

const FindIcon = () => (
  <Ic w={30} h={30}>
    <circle cx="19" cy="11" r="10" fill="#fafafa" />
    <path d="M12 18.5 1 29.5" strokeWidth="1.3" />
  </Ic>
);

const AnalyzeIcon = () => (
  <Ic w={32} h={33}>
    <rect x="0.8" y="0.8" width="30.4" height="31" fill="#fafafa" strokeWidth="1.6" />
    <path d="M1 3.500h30" stroke="#b3b0ad" strokeWidth="3" />
    <path d="M1 5h30" stroke={INK} strokeWidth="1.2" />
    <path d="M1 15h30M1 24h30M8 5v27M24 5v27M14 24v8" stroke="#797774" />
    <circle cx="15.5" cy="14" r="10" fill="#fff" strokeWidth="1.5" />
    <path d="M9.5 18.5V14h3v4.500z" fill="#bbb" />
    <path d="M13.5 18.5v-10H17v10z" fill="#fff" />
    <path d="M18 18.5v-8h3v8z" fill="#83c3f0" stroke="#0f6cbd" />
    <path d="M22.5 21.5 31 31" strokeWidth="1.8" />
  </Ic>
);

/* ---------- swatch drawing ---------- */

type Tone = { base: string; dark: string; l1: string; l2: string; edge: string; dash: string };

const TONES: Tone[] = [
  { base: "#000000", dark: "#404040", l1: "#a6a6a6", l2: "#d9d9d9", edge: "#000000", dash: "#000000" },
  { base: "#3974c3", dark: "#27538f", l1: "#b4c7e9", l2: "#d9e2f4", edge: "#8ca9dc", dash: "#27538f" },
  { base: "#f47c3c", dark: "#c8561e", l1: "#fcc9ae", l2: "#fde4d8", edge: "#f6ae86", dash: "#c8561e" },
  { base: "#a5a5a5", dark: "#7b7b7b", l1: "#dbdbdb", l2: "#ededed", edge: "#c8c8c8", dash: "#7b7b7b" },
  { base: "#ffbf37", dark: "#c48d24", l1: "#ffe497", l2: "#fff1cc", edge: "#ffd966", dash: "#c48d24" },
  { base: "#509ed4", dark: "#1e78b4", l1: "#bad8ed", l2: "#ddebf7", edge: "#98c4e6", dash: "#1e78b4" },
  { base: "#6fae50", dark: "#51833b", l1: "#c5e1b6", l2: "#e2f0db", edge: "#a8d08d", dash: "#51833b" },
];

const X_A = [3, 12, 21, 30, 40];
const X_B = [2, 12, 22, 31, 41];

type Kind = "L1" | "L2" | "L3" | "M1" | "M2" | "M3" | "M4" | "D1" | "D2";

const Swatch = ({ kind, t, head }: { kind: Kind; t: Tone; head?: string }) => {
  const fill = (y: number, h: number, c: string, x = 0, w = 48) => <rect key={`f${x}-${y}`} x={x} y={y} width={w} height={h} fill={c} />;
  const dashes = (xs: number[], ys: number[], c: string, first = c) =>
    ys.flatMap((y, i) => xs.map((x) => <rect key={`d${x}-${y}`} x={x} y={y} width="5" height="1" fill={i === 0 ? first : c} />));
  const frame = (c: string) => <rect x="0.5" y="0.5" width="47" height="47" fill="none" stroke={c} />;
  const cols = (c: string, y: number) => [9, 19, 28, 38].map((x) => fill(y, 48 - y, c, x, 1));
  const black = t.base === "#000000";
  const parts: Record<Kind, () => React.ReactNode> = {
    L1: () => [fill(0, 1, t.base), fill(11, 1, t.base), fill(12, 8, t.l2), fill(29, 8, t.l2), fill(47, 1, t.base), dashes(X_B, [6, 16, 24, 32, 41], t.dash)],
    L2: () => [frame(t.base), fill(0, 10, t.base), fill(19, 1, t.base), fill(28, 1, t.base), fill(38, 1, t.base), dashes(X_A, [5, 14, 24, 33, 42], "#000", "#fff")],
    L3: () => [fill(12, 8, t.l2), fill(29, 8, t.l2), fill(11, 1, t.base), cols(t.base, 0), frame(t.base), dashes(X_A, [6, 16, 24, 32, 41], "#000")],
    M1: () => [fill(0, 10, t.base), fill(10, 9, t.l2), fill(27, 9, t.l2), frame(t.edge), dashes(X_A, [5, 14, 23, 31, 41], "#000", "#fff")],
    M2: () => [
      fill(0, 11, t.base),
      fill(12, 9, t.l1),
      fill(21, 9, t.l2),
      fill(30, 9, t.l1),
      fill(39, 9, t.l2),
      cols("#fff", 0),
      dashes(X_B, [5, 16, 25, 34, 43], "#000", "#fff"),
    ],
    M3: () => [
      fill(1, 10, t.base),
      fill(0, 1, "#000"),
      fill(11, 1, "#000"),
      fill(12, 8, "#d9d9d9"),
      fill(29, 8, "#d9d9d9"),
      fill(47, 1, "#000"),
      black && cols("#000", 12),
      black && frame("#000"),
      dashes(black ? X_A : X_B, [6, 16, 24, 32, 41], "#000", "#fff"),
    ],
    M4: () => [fill(0, 48, t.l2), fill(10, 9, t.l1), fill(27, 9, t.l1), cols(t.edge, 0), frame(t.edge), dashes(X_A, [5, 14, 23, 31, 41], "#000")],
    D1: () => [
      fill(0, 11, "#000"),
      fill(12, 9, t.dark),
      fill(21, 9, black ? "#737373" : t.base),
      fill(30, 9, t.dark),
      fill(39, 9, black ? "#737373" : t.base),
      dashes(X_B, [5, 16, 25, 34, 43], "#fff"),
    ],
    D2: () => [fill(0, 10, head ?? "#000"), fill(10, 9, t.l1), fill(19, 10, t.l2), fill(29, 9, t.l1), fill(38, 10, t.l2), dashes(X_B, [4, 14, 24, 33, 43], "#000", "#fff")],
  };
  return (
    <svg width="48" height="48" shapeRendering="crispEdges">
      {React.Children.toArray(parts[kind]())}
    </svg>
  );
};

const SwatchRow = ({ kind }: { kind: Kind }) => (
  <>
    {TONES.map((t, i) => (
      <SwatchCell key={t.base}>
        <Swatch kind={kind} t={t} />
        {kind === "L2" && i === 0 && (
          <>
            <Picked />
            <Tooltip>白, テーブル スタイル 淡色 8</Tooltip>
          </>
        )}
      </SwatchCell>
    ))}
  </>
);

const StyleGallery = () => (
  <Gallery>
    <Section>
      <SectionTitle $h={33}>淡色</SectionTitle>
      <Swatches>
        <SwatchRow kind="L1" />
        <SwatchRow kind="L2" />
        <SwatchRow kind="L3" />
      </Swatches>
    </Section>
    <Section $rule>
      <SectionTitle $h={33}>中間</SectionTitle>
      <Swatches>
        <SwatchRow kind="M1" />
        <SwatchRow kind="M2" />
        <SwatchRow kind="M3" />
        <SwatchRow kind="M4" />
      </Swatches>
    </Section>
    <Section $rule>
      <SectionTitle $h={33}>濃色</SectionTitle>
      <Swatches>
        <SwatchRow kind="D1" />
        <SwatchCell><Swatch kind="D2" t={TONES[0]} /></SwatchCell>
        <SwatchCell><Swatch kind="D2" t={TONES[1]} head={TONES[2].base} /></SwatchCell>
        <SwatchCell><Swatch kind="D2" t={TONES[3]} head={TONES[4].base} /></SwatchCell>
        <SwatchCell><Swatch kind="D2" t={TONES[5]} head={TONES[6].base} /></SwatchCell>
      </Swatches>
    </Section>
  </Gallery>
);

/* ---------- sheet data ---------- */

const COLS: [string, number][] = [
  ["A", 72],
  ["B", 144],
  ["C", 114],
  ["D", 116],
  ["E", 86],
  ["F", 72],
  ..."GHIJKLMNOPQRSTUVWX".split("").map((c) => [c, 72] as [string, number]),
];

const DATA: Record<number, string[]> = {
  2: ["Title", "Requester", "Date", "Details", "Status"],
  3: ["Title 1", "Requester 1", "1/10/2022", "Example 1", "Status 1"],
  4: ["Title 2", "Requester 2", "1/11/2022", "Example 2", "Status 2"],
  5: ["Title 3", "Requester 3", "1/12/2022", "Example 3", "Status 3"],
  6: ["Title 4", "Requester 4", "1/13/2022", "Example 4", "Status 4"],
};

const MENU: [string, number?][] = [
  ["ファイル", 36],
  ["ホーム"],
  ["挿入"],
  ["描画"],
  ["ページ レイアウト"],
  ["数式"],
  ["データ"],
  ["校閲"],
  ["表示"],
  ["自動化"],
  ["ヘルプ", 34],
];

const BigButton = ({ w, icon, label, active, s, dx, chev = true, children }: { w: number; icon: React.ReactNode; label: string; active?: boolean; s?: number; dx?: number; chev?: boolean; children?: React.ReactNode }) => (
  <Big $w={w} $active={active}>
    <BigIcon $dx={dx}>{icon}</BigIcon>
    <BigLabel $s={s}>{label}</BigLabel>
    {chev && (
      <BigChev>
        <Chev />
      </BigChev>
    )}
    {children}
  </Big>
);

export default function App() {
  return (
    <Desktop>
      <Global />
      <Window>
        <Clip>
          <TabStrip>
            <Lights>
              <Light $c="#ff5f57" />
              <Light $c="#febc40" />
              <Light $c="#18c84c" />
            </Lights>
            {TABS.map((t, i) => (
              <Tab key={i} $active={t.active}>
                {t.icon}
                <TabText $fade={t.fade}>{t.text}</TabText>
                {t.active && (
                  <TabClose>
                    <Ic w={8} c="#fbfbfe" sw={1.2}>
                      <path d="M0.5 0.5l7 7M7.5 0.5l-7 7" />
                    </Ic>
                  </TabClose>
                )}
              </Tab>
            ))}
            <NewTab>
              <Ic w={12} c="#fbfbfe" sw={1.4}>
                <path d="M6 0v12M0 6h12" />
              </Ic>
            </NewTab>
          </TabStrip>

          <NavBar>
            <NavButtons>
              <Ic w={16} c="#fbfbfe" sw={1.4}>
                <path d="M14.5 8.5H1.5M7 3 1.5 8.5 7 14" strokeLinecap="round" strokeLinejoin="round" />
              </Ic>
              <Ic w={16} c="#6c6b74" sw={1.4}>
                <path d="M1 8.5h13M8.5 3 14 8.5 8.5 14" strokeLinecap="round" strokeLinejoin="round" />
              </Ic>
              <Ic w={16} c="#fbfbfe" sw={1.5}>
                <path d="M13.2 5A6.3 6.3 0 1 0 14.3 9" strokeLinecap="round" />
                <path d="M15 1.5v6H9z" fill="#fbfbfe" stroke="none" />
              </Ic>
            </NavButtons>
            <UrlBox>
              <Ic w={16} c="#fbfbfe" sw={1.5}>
                <path d="M8 1 14.3 3.3c0 5-1.3 9-6.3 11.7C3 12.3 1.7 8.3 1.7 3.3z" strokeLinejoin="round" />
              </Ic>
              <svg width="12" height="0" />
              <Ic w={16} c="#fbfbfe" sw={1.5}>
                <rect x="2.5" y="7.5" width="11" height="8" rx="1" />
                <path d="M4.8 7V4.5a3.2 3.7 0 0 1 6.4 0V7" />
              </Ic>
              <Url>
                https://tokawatadev-my.<b>sharepoint.com</b>/:x:/r/personal/tokawata_tokawatadev_onmicrosoft_com/_layouts/15/Doc.aspx?sourcedoc=&#123;6F696C01-2713-456A-8A3B-700A51862209&#125;&amp;file=ブック.xlsx&amp;action=editnew
              </Url>
              <Ic w={16} c="#fbfbfe" sw={1.4}>
                <path d="M8 1l2.1 4.7 5.1.6-3.8 3.4 1 5L8 12.2l-4.4 2.5 1-5L.8 6.3l5.1-.6z" strokeLinejoin="round" />
              </Ic>
            </UrlBox>
            <NavRight>
              <Ic w={18} h={16} c="#fbfbfe" sw={1.4}>
                <path d="M3.5 2h11c.8 0 1.2.5 1.2 1.2V8a6.7 6.3 0 0 1-13.4 0V3.2C2.3 2.5 2.7 2 3.5 2z" />
                <path d="M5.8 6.3 9 9.3l3.2-3" />
              </Ic>
              <Ic w={18} h={16} c="#fbfbfe" sw={1.4}>
                <path d="M9 0v10.5M5 7l4 4 4-4M2.5 11.5v3h13v-3" />
              </Ic>
              <Ic w={16} c="#fbfbfe" sw={1.5}>
                <path d="M2 3h12M2 7.5h12M2 12h12" />
              </Ic>
            </NavRight>
          </NavBar>

          <Header>
            <Waffle>
              <svg width="16" height="16" fill="#fff">
                {[2, 8, 14].flatMap((x) => [2, 8, 14].map((y) => <circle key={`${x}-${y}`} cx={x} cy={y} r="1.7" />))}
              </svg>
            </Waffle>
            <AppName>Excel</AppName>
            <DocName>
              <Latin $s={-0.51}>TableTemplateForDataverseForTeams</Latin>
              <span>-</span>
              <span>保存済み</span>
              <Chev size={8} c="#fff" w={1} />
            </DocName>
            <SearchBox>
              <Ic w={14} h={14} c="#00713d">
                <circle cx="8.8" cy="5" r="4.5" />
                <path d="M5.5 8.2 0.5 13.5" />
              </Ic>
              検索 (オプション + Q)
            </SearchBox>
            <HeaderRight>
              <Ic w={18} c="#fff" sw={1.4}>
                <path d="M7.7 1.5h2.6l.5 2 1.3.6 1.9-1 1.8 1.8-1 1.9.6 1.3 2 .5v2.1l-2 .5-.6 1.3 1 1.9-1.8 1.8-1.9-1-1.3.6-.5 1.7H7.700l-.5-1.700-1.300-.6-1.900 1-1.800-1.800 1-1.900-.6-1.300-2-.5V8.600l2-.5.6-1.300-1-1.900L4 3.100l1.900 1 1.300-.6z" transform="translate(.4 0) scale(.96)" />
                <circle cx="9" cy="9" r="2.6" />
              </Ic>
              <Avatar>T</Avatar>
            </HeaderRight>
          </Header>

          <Ribbon>
            <MenuRow>
              {MENU.map(([m, g], i) => (
                <MenuItem key={m} $gap={g} $active={i === 1}>
                  {m}
                </MenuItem>
              ))}
              <ActionButton $w={82} $left="0">
                <Ic w={15} h={16} c={GREEN} sw={1.2}>
                  <path d="M1 15l1-4.5L10.5 1.5a1.8 1.8 0 0 1 2.6 2.6L5 13z M9 3l3 3 M2 10.5 5 13" />
                </Ic>
                編集
                <Chev size={9} c={GREEN} />
              </ActionButton>
              <ActionButton $w={66} $solid $left="auto">
                <Ic w={15} h={16} c="#fff" sw={1.2}>
                  <path d="M4 5H1v10h11v-4" />
                  <path d="M9.5 1.5 14 5.5l-4.5 4V7C6.5 7 5 8.5 4 11c0-4 2-7 5.5-7z" />
                </Ic>
                共有
              </ActionButton>
              <ActionButton $w={94}>
                <Ic w={15} h={15} c={GREEN} sw={1.2}>
                  <path d="M1 1.5h13v9H7L4 14v-3.5H1z" />
                </Ic>
                コメント
              </ActionButton>
              <ActionButton $w={136}>
                <Ic w={17} h={12} c={GREEN} sw={1.4}>
                  <path d="M0 6.5h3L5.5 1l4 9.5 2.5-7 1.5 3H15" />
                  <circle cx="1.5" cy="6.5" r="0.8" fill={GREEN} />
                  <circle cx="15.3" cy="6.5" r="0.8" fill={GREEN} />
                </Ic>
                キャッチアップ
              </ActionButton>
            </MenuRow>

            <Groups>
              <Group $w={57}>
                <GroupBody $pad={12}>
                  <Stack $top={15} $gap={12}>
                    <UndoIcon />
                    <UndoIcon flip />
                  </Stack>
                </GroupBody>
                <GroupLabel>元に戻す</GroupLabel>
              </Group>

              <Group $w={223}>
                <GroupBody $pad={7}>
                  <BigButton w={54} dx={5} icon={<PasteIcon />} label="貼り付け" />
                  <Stack $left={5}>
                    <LineItem>
                      <Slot $w={22}><ScissorsIcon /></Slot>切り取り
                    </LineItem>
                    <LineItem>
                      <Slot $w={22}><CopyIcon /></Slot>コピー
                    </LineItem>
                    <LineItem>
                      <Slot $w={22}><PainterIcon /></Slot>書式のコピー/貼り付け
                    </LineItem>
                  </Stack>
                </GroupBody>
                <GroupLabel>クリップボード</GroupLabel>
              </Group>

              <Group $w={246}>
                <GroupBody $pad={8}>
                  <Stack $top={12} $gap={3}>
                    <RowBox>
                      <Combo $w={128}>
                        <span><Latin $s={1.6}>MS P</Latin>ゴシック</span>
                        <Chev />
                      </Combo>
                      <Combo $w={52} $join>11<Chev /></Combo>
                      <Slot $w={29}>
                        <AFont $size={17}>A</AFont>
                        <Stack><Chev size={5} c={BLUE} up /><svg width="1" height="10" /></Stack>
                      </Slot>
                      <Slot $w={20}>
                        <AFont $size={14}>A</AFont>
                        <Stack><Chev size={5} c={BLUE} /><svg width="1" height="10" /></Stack>
                      </Slot>
                    </RowBox>
                    <RowBox>
                      <Slot $w={24}><Glyph $style="b">B</Glyph></Slot>
                      <Slot $w={24}><Glyph $style="i">I</Glyph></Slot>
                      <Slot $w={24}><Glyph $style="u">U</Glyph></Slot>
                      <Slot $w={24}><Glyph $style="d">D</Glyph></Slot>
                      <Slot $w={24}><Glyph $style="s">ab</Glyph></Slot>
                      <Slot $w={22}><BordersIcon /></Slot>
                      <Slot $w={11}><Chev /></Slot>
                      <Slot $w={25}><FillIcon /></Slot>
                      <Slot $w={8}><Chev /></Slot>
                      <Slot $w={28}><ColorBox>A</ColorBox></Slot>
                      <Slot $w={4}><Chev /></Slot>
                    </RowBox>
                  </Stack>
                </GroupBody>
                <GroupLabel>フォント</GroupLabel>
              </Group>

              <Group $w={267}>
                <GroupBody $pad={8}>
                  <Stack>
                    <RowBox>
                      <Slot $w={24}><Lines kind="v" top={4} /></Slot>
                      <Slot $w={24}><Lines kind="v" top={7} /></Slot>
                      <Slot $w={24} $bg="#dfdedd"><Lines kind="v" top={11} /></Slot>
                    </RowBox>
                    <RowBox>
                      <Slot $w={24}><Lines kind="l" top={5} /></Slot>
                      <Slot $w={24}><Lines kind="c" top={5} /></Slot>
                      <Slot $w={24}><Lines kind="r" top={5} /></Slot>
                    </RowBox>
                    <RowBox>
                      <Slot $w={24}><IndentIcon /></Slot>
                      <Slot $w={24}><IndentIcon right /></Slot>
                    </RowBox>
                  </Stack>
                  <VRule />
                  <Stack $top={12} $gap={4} $left={6}>
                    <LineItem>
                      <Slot $w={22}>
                        <WrapBox>
                          <span>ab</span>
                          <span>c</span>
                          <Ic w={9} h={8} c={BLUE} sw={1.3}><path d="M8 0v4H2M4.5 1.5 2 4l2.5 2.5" /></Ic>
                        </WrapBox>
                      </Slot>
                      文字列の折り返し
                    </LineItem>
                    <LineItem>
                      <Slot $w={22}><MergeIcon /></Slot>
                      <BigLabel $s={-0.15}>セルを結合して中央揃え</BigLabel>
                      <Slot $w={16}><Chev /></Slot>
                    </LineItem>
                  </Stack>
                </GroupBody>
                <GroupLabel>配置</GroupLabel>
              </Group>

              <Group $w={147}>
                <GroupBody $pad={8}>
                  <Stack $top={12} $gap={3}>
                    <Combo $w={128}>標準<Chev /></Combo>
                    <RowBox>
                      <Slot $w={22}><Symbol $size={16}>$</Symbol></Slot>
                      <Slot $w={11}><Chev /></Slot>
                      <Slot $w={25}><Symbol $size={18}>%</Symbol></Slot>
                      <Slot $w={23}>
                        <svg width="9" height="13" fill={INK}><path d="M4.5 0a4 4 0 0 1 4 4c0 4-3 7-7.5 9C3.5 11 4.5 9.5 4.5 8A4 4 0 0 1 4.5 0z" /></svg>
                      </Slot>
                      <Slot $w={24}>
                        <DecBox>
                          {".0\n.00"}
                          <Ic w={10} h={6} c={BLUE} sw={1.2}><path d="M9 3H1M3.5 .5 1 3l2.5 2.5" /></Ic>
                        </DecBox>
                      </Slot>
                      <Slot $w={24}>
                        <DecBox $right>
                          {".00\n.0"}
                          <Ic w={10} h={6} c={BLUE} sw={1.2}><path d="M0 3h8M5.5 .5 8 3 5.5 5.5" /></Ic>
                        </DecBox>
                      </Slot>
                    </RowBox>
                  </Stack>
                </GroupBody>
                <GroupLabel>数値</GroupLabel>
              </Group>

              <Group $w={278}>
                <GroupBody $pad={8}>
                  <BigButton w={76} icon={<CondIcon />} label="条件付き書式" />
                  <BigButton w={134} dx={2} icon={<TableFmtIcon />} label="テーブルとして書式設定" s={-0.15} active>
                    <StyleGallery />
                  </BigButton>
                  <BigButton w={50} dx={2} icon={<StyleIcon />} label="スタイル" s={-0.2} />
                </GroupBody>
              </Group>

              <Group $w={137}>
                <GroupBody $pad={8}>
                  <BigButton w={40} icon={<InsertIcon />} label="挿入" />
                  <BigButton w={40} dx={2} icon={<DeleteIcon />} label="削除" />
                  <BigButton w={40} icon={<FormatIcon />} label="書式" />
                </GroupBody>
              </Group>

              <Group $w={311}>
                <GroupBody $pad={9}>
                  <Stack $w={107}>
                    <LineItem>
                      <Slot $w={23}><SigmaIcon /></Slot>オート SUM<Slot $w={15}><Chev /></Slot>
                    </LineItem>
                    <LineItem>
                      <Slot $w={23}><EraserIcon /></Slot>クリア<Slot $w={15}><Chev /></Slot>
                    </LineItem>
                  </Stack>
                  <BigButton w={121} icon={<SortIcon />} label="並べ替えとフィルター" />
                  <BigButton w={66} icon={<FindIcon />} label="検索と選択" />
                </GroupBody>
              </Group>

              <Group $w={81}>
                <GroupBody $pad={0}>
                  <BigButton w={80} icon={<AnalyzeIcon />} label="データ分析" chev={false} />
                </GroupBody>
                <GroupLabel>分析</GroupLabel>
              </Group>
              <Collapse>
                <Chev size={9} up />
              </Collapse>
            </Groups>
          </Ribbon>

          <FormulaBar>
            <FBox $w={122}>B2<Chev /></FBox>
            <FBox $w={31} $center><Fx>f<sub>x</sub></Fx></FBox>
            <FBox>Title</FBox>
          </FormulaBar>

          <Sheet>
            <SheetRow $h={19}>
              <Corner $w={37}>
                <svg width="14" height="14" fill="#b5b5b5"><path d="M14 0v14H0z" /></svg>
              </Corner>
              {COLS.map(([c, w], i) => (
                <ColHead key={c} $w={w} $sel={i >= 1 && i <= 5}>{c}</ColHead>
              ))}
            </SheetRow>
            {Array.from({ length: 34 }, (_, k) => k + 1).map((r) => (
              <SheetRow key={r} $h={18}>
                <RowHead $sel={r >= 2 && r <= 6}>{r}</RowHead>
                {COLS.map(([c, w], i) => {
                  const inside = !!DATA[r] && i >= 1 && i <= 5;
                  return (
                    <Cell key={c} $w={w} $sel={inside} $active={r === 2 && i === 1} $right={i === 3 && r > 2}>
                      {inside ? DATA[r][i - 1] : null}
                    </Cell>
                  );
                })}
              </SheetRow>
            ))}
            <ColMark />
            <RowMark />
            <Selection>
              <Handle />
            </Selection>
          </Sheet>

          <SheetTabs>
            <TabSlot $w={34}>
              <Ic w={10} h={12} c="#b5b3b1" box="-2 0 10 12"><path d="M6.5 1 1.5 6l5 5" /></Ic>
            </TabSlot>
            <TabSlot $w={30}>
              <Ic w={10} h={12} c="#b5b3b1"><path d="M2.5 1l5 5-5 5" /></Ic>
            </TabSlot>
            <TabSlot $w={32}>
              <Ic w={14} h={12}><path d="M1 1.5h12M1 6h12M1 10.5h12" /></Ic>
            </TabSlot>
            <SheetName>Sheet1</SheetName>
            <TabSlot $w={20}>
              <Ic w={12} h={12}><path d="M6 0v12M0 6h12" /></Ic>
            </TabSlot>
          </SheetTabs>

          <StatusBar>
            <Stat $gap={18}>計算モード: 自動</Stat>
            <Stat $gap={0}>ブックの統計情報</Stat>
            <Spacer />
            <Stat $gap={14} $s={0.15}>平均: 44572.5</Stat>
            <Stat $gap={14} $s={0.05}>データの個数: 25</Stat>
            <Stat $gap={15} $s={0.2}>合計: 178290</Stat>
            <Chev size={5} />
            <Stat $gap={44}> </Stat>
            <Stat $gap={0} $s={0.22}>Microsoft にフィードバックを送信</Stat>
          </StatusBar>
        </Clip>
        <RedFrame />
      </Window>
    </Desktop>
  );
}
